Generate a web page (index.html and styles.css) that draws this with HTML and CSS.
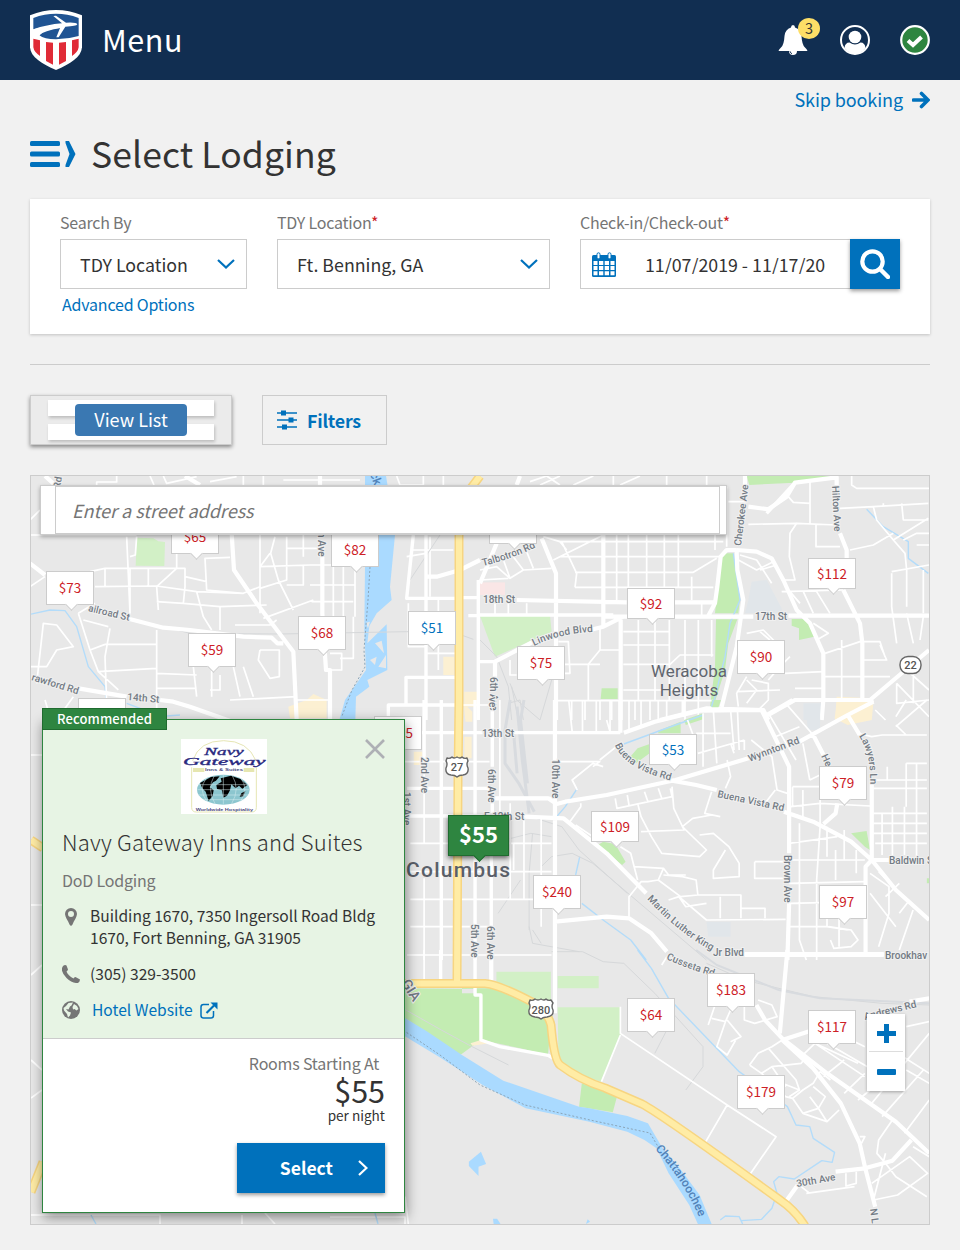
FILE: index.html
```html
<!DOCTYPE html>
<html lang="en">
<head>
  <meta charset="UTF-8" />
  <meta name="viewport" content="width=device-width, initial-scale=1.0"/>
  <title>Select Lodging</title>
  <link rel="stylesheet" href="styles.css">
</head>
<body>

  <header class="topbar">
    <svg class="logo" width="52" height="60" viewBox="0 0 156 180">
      <path d="M0 16Q78-16 156 16V112C154 142 120 162 78 180C36 162 2 142 0 112Z" fill="#fff"/>
      <path d="M10 24Q78-1 146 24V78Q112 88 78 88Q42 88 28 76Q42 62 90 54L80 46Q42 50 10 58Z" fill="#205493"/>
      <path d="M10 58Q50 44 96 40L70 18L78 17L108 38Q140 36 142 43Q140 49 106 50L86 82L79 82L90 54Q34 60 28 78L10 72Z" fill="#fff"/>
      <path d="M10 86L30 91V138Q12 126 10 112ZM48 96L69 98V164L48 153ZM87 98L108 96V153L87 164ZM126 91L146 86V112Q144 126 126 138Z" fill="#e02b37"/>
    </svg>
    <span class="menu">Menu</span>
    <div class="top-icons">
      <div class="bell">
        <svg width="30" height="30" viewBox="0 0 30 30">
          <path d="M15 0Q17 0 17 2.500Q23 4.500 23.500 11Q24 20 27 22.500Q29 24 29.500 26H.5Q1 24 3 22.500Q6 20 6.500 11Q7 4.500 13 2.500Q13 0 15 0Z" fill="#fff"/>
          <path d="M11 26a4 4 0 0 0 8 0Z" fill="#fff"/>
          <path d="M12 26.300a3 3 0 0 0 2 2.400" stroke="#112e51" fill="none"/>
        </svg>
        <span class="count">3</span>
      </div>
      <svg width="30" height="30" viewBox="0 0 30 30">
        <circle cx="15" cy="15" r="14" fill="#112e51" stroke="#fff" stroke-width="2"/>
        <circle cx="15" cy="12" r="6.300" fill="#fff"/>
        <path d="M4.500 23Q5 17.500 9.500 17.500Q15 21.500 20.500 17.500Q25 17.500 25.500 23Q21 29 15 29Q9 29 4.500 23Z" fill="#fff"/>
      </svg>
      <svg width="30" height="30" viewBox="0 0 30 30">
        <circle cx="15" cy="15" r="13.800" fill="#2e8540" stroke="#fff" stroke-width="2.200"/>
        <path d="M8 15.500L13 20L21.500 12" fill="none" stroke="#fff" stroke-width="4"/>
      </svg>
    </div>
  </header>

  <main>
    <a class="skip" href="#"><span>Skip booking</span>
      <svg width="18" height="18" viewBox="0 0 18 18"><path d="M1.500 9H15M9.500 2.500L16 9L9.500 15.500" fill="none" stroke="#0071bc" stroke-width="3.600" stroke-linecap="round"/></svg>
    </a>

    <div class="title">
      <svg width="46" height="28" viewBox="0 0 46 28">
        <g fill="#0071bc"><rect y="1" width="30" height="5" rx="1.500"/><rect y="11.500" width="30" height="5" rx="1.500"/><rect y="22" width="30" height="5" rx="1.500"/>
        <path d="M35.500 1H39L45.500 14L39 27H35.500V25L39.500 14L35.500 3Z"/></g>
      </svg>
      <h1>Select Lodging</h1>
    </div>

    <section class="search">
      <div class="field by">
        <label>Search By</label>
        <div class="box">TDY Location
          <svg width="18" height="10" viewBox="0 0 18 10"><path d="M1 1L9 8.500L17 1" fill="none" stroke="#0071bc" stroke-width="2.200"/></svg>
        </div>
        <a class="advanced" href="#">Advanced Options</a>
      </div>
      <div class="field loc">
        <label>TDY Location<b>*</b></label>
        <div class="box">Ft. Benning, GA
          <svg width="18" height="10" viewBox="0 0 18 10"><path d="M1 1L9 8.500L17 1" fill="none" stroke="#0071bc" stroke-width="2.200"/></svg>
        </div>
      </div>
      <div class="field dates">
        <label>Check-in/Check-out<b>*</b></label>
        <div class="date-row">
          <div class="box">
            <svg width="24" height="25" viewBox="0 0 24 25">
              <rect y="3" width="24" height="22" rx="1.500" fill="#0071bc"/>
              <path d="M1.500 9h4v4h-4zM7 9h4.300v4H7zM12.700 9H17v4h-4.300zM18.500 9h4v4h-4zM1.500 14h4v4h-4zM7 14h4.300v4H7zM12.700 14H17v4h-4.300zM18.500 14h4v4h-4zM1.500 19.200h4v4h-4zM7 19.200h4.300v4H7zM12.700 19.200H17v4h-4.300zM18.500 19.200h4v4h-4z" fill="#fff"/>
              <rect x="5" y=".8" width="3" height="6" rx="1.500" fill="#fff" stroke="#0071bc"/>
              <rect x="16" y=".8" width="3" height="6" rx="1.500" fill="#fff" stroke="#0071bc"/>
            </svg>
            <span class="range">11/07/2019 - 11/17/2019</span>
          </div>
          <button class="go" aria-label="Search">
            <svg width="30" height="30" viewBox="0 0 30 30"><circle cx="12.500" cy="12.500" r="10.200" fill="none" stroke="#fff" stroke-width="4.200"/><path d="M20 20L28 28" stroke="#fff" stroke-width="4.500" stroke-linecap="round"/></svg>
          </button>
        </div>
      </div>
    </section>

    <hr>

    <div class="actions">
      <button class="view-list"><i></i><i></i><span>View List</span></button>
      <button class="filters">
        <svg width="20" height="20" viewBox="0 0 20 20"><path d="M0 3H20M0 10H20M0 17H20" stroke="#0071bc" stroke-width="1.600"/><path d="M4 .5h5v5H4zM11.500 7.500h5v5h-5zM5 14.500h5v5H5z" fill="#0071bc"/></svg>
        Filters
      </button>
    </div>

    <section class="map" id="map">
      <svg class="streets" width="898" height="748" viewBox="31 476 898 748">
        <!-- north west -->
        <g transform="translate(30 470) scale(.33333)">
          <path class="water" d="M1005 18H1068L1075 60L1095 195L1080 350L1085 390L1040 430L1018 468L1012 520L1070 463L1072 600L1012 630L1018 650L978 680L976 750L955 805H920L928 750L945 690L1008 600L1003 480L1005 290Z"/>
          <path class="land" d="M1035 520L1055 512L1062 550ZM1020 570L1040 560L1035 585ZM1045 590L1068 555V595ZM1008 458L1020 455L1014 475Z"/>
          <path class="park light" d="M320 203L370 205L385 214L405 216L403 288L317 287Z"/>
          <path class="shop" d="M775 710L830 690L850 672L890 690V745H780ZM1240 560H1272V615H1240ZM1303 665H1345V710H1303Z"/>
          <path class="stream" d="M0 433L60 420L105 422L140 470L175 590L225 650L230 700M290 700L330 715L370 745L410 738L450 735"/>
          <path class="minor" d="M0 195H320M290 200L300 430L290 440M320 200L316 255L300 260M440 250V295L380 350L385 420M195 350L380 348L500 365L640 370L690 350M180 305L225 295H465V350L460 400M225 295V350M300 295V430M355 295V350M380 395L460 400L570 410L710 405M600 262L525 265L530 360L640 370M465 320L530 335M500 365L520 440L545 480M570 410V480M690 195V430M690 290L840 285H1005M735 200L722 250L745 330L790 420M720 250L690 290M770 200V330L690 355M770 235H870M820 195V260M820 285V345H770M840 345H975M845 395H970M910 290V440M940 290V440M975 290V440M700 445L850 390M615 465H720L740 450M380 480V750M240 475L225 560L230 700M380 523H225M380 610L500 615M380 655H500M205 605L380 595M490 590L500 680M545 590V680M570 615V660H540M610 590L630 680M640 590L670 680M600 690L800 680M800 690H900M690 540H748V620L720 625L685 570L690 540M900 550H935V600H890M930 565H970V440M20 640L40 460L80 465L130 530L80 540L50 590H0M145 430L180 540L205 605L265 660M195 400L145 430M0 350L45 320M160 450L235 470M180 540L225 523M0 150L30 120M200 45V36H260V18M360 18L372 45M500 20L410 40L400 18M540 35L620 20M760 30H990M640 18V45M700 18V45M1100 18L1110 45H1180V18M1240 18V45M1145 240H1270M1200 200V380M1130 260L1188 250M1225 385V600M1135 400V530H1188M1280 550H1190M130 680L80 750M45 690L60 740"/>
          <path class="rail" d="M400 470L480 490L750 492L1130 485L1280 490L1330 508M1230 195L1140 330"/>
          <path class="mid" d="M1188 195V750M1150 195L1130 385H1280M1275 622H1128V705M1275 705H1075V745M1345 330V750M1295 383H1350M1315 437H1350"/>
          <path class="main" d="M870 18V45M877 260V430L888 600H900V750M605 190L612 300L680 400L790 545L800 750M760 520H742L725 503L640 500L480 480L400 473L290 445M0 280L45 315M145 655L290 680M390 690L430 695L480 710L620 760M45 18L75 45M465 18L510 45M1190 320H1220L1290 300L1350 270"/>
        </g>
        <!-- north east -->
        <g transform="translate(480 470) scale(.33333)">
          <path class="park" d="M800 18H1070L1065 22L945 38L808 45ZM725 250H760L780 390L775 430H705L715 330ZM708 448H772L745 520L735 600L700 710H690L705 590ZM365 655H413V687H362ZM935 447H980L1003 500L957 510V475L935 467Z"/>
          <path class="park light" d="M0 438L210 437L215 485L45 560Z"/>
          <path class="block" d="M815 335L860 330L905 415V430H795L805 390ZM970 700H1025V750H970Z"/>
          <path class="pink" d="M0 337H75V375H0Z"/>
          <path class="shop" d="M1070 680L1180 685L1160 750H1065Z"/>
          <path class="stream" d="M760 250L780 390L750 460L735 560L715 640L700 700M1160 118L1210 170L1285 215V265L1345 310"/>
          <path class="rail" d="M0 510L50 560L85 650L95 750M90 640L110 690L180 750M215 630L180 750M85 700L120 690L130 750M95 650L115 750"/>
          <path class="minor" d="M240 215H730M240 260H720M285 307H640L710 265M285 352H700M410 195V390M445 195V390M500 195V390M553 195V350M595 195V350M635 320V390M245 215L290 310L285 352M190 200L240 215L260 240M220 270L370 195M0 300L50 290L90 325L130 300L215 295M85 325L0 330M65 255L90 325M100 260L130 300M140 245L160 295M45 400V435M85 400V435M140 400V435M665 400V435M705 120V240M740 50V230M680 18V45M150 35L200 18L240 45M180 45L240 18M280 45L340 18M420 45L480 18M400 18V45M560 18V45M745 95H800M805 163L950 160L930 190L928 260L945 330L905 330M950 160L1070 165M925 80L940 97L990 100M990 35V160M1008 165V230H1080M1115 18V45L1130 55H1347M1080 115L1180 110L1345 100M1180 110L1190 150L1240 210L1345 145M1240 210L1275 250L1280 300V410M1210 100V110M1265 100L1270 150H1345M1270 210L1310 190H1347M1310 225H1347M1110 240L1180 225L1240 190M775 270L830 300L880 275M780 255L830 270L875 340M840 300L890 285M905 365L1090 360M930 365L960 400M970 365L1000 430M1010 365L1050 430M1235 310V410L1250 520M1235 305L1347 285M1330 300V430M1280 430L1300 520M1330 440L1320 510M430 485H570M430 525H570M475 450V690M525 450V690M568 450V690M615 450V750M655 450V750M695 450V560M430 583H570L600 555H700M430 660H560L700 655M230 692H700M325 690V583L360 540V470M235 583H360M235 515H265L270 610H230M360 540H422M275 692V750M315 692V750M360 692V750M395 692V750M465 692V750M510 692V750M560 692V750M610 692V740M800 490L850 480L890 520M840 485L870 510M800 620L770 670L775 710M800 630L830 660L800 700M815 630L865 640V690L840 715M770 665L900 660M865 630L900 590L930 560M915 610L1030 605M945 655H1030M1035 550L1140 515H1200L1215 560M1000 460L1045 490L1010 510M1035 620H1145M1150 620H1230M1150 570H1220L1200 525M1085 510V690M1250 640V700L1347 690M1280 600L1347 660M1250 640L1347 740M1300 590V700M90 570V615H110"/>
          <path class="mid" d="M1080 750L1180 690M860 130L945 38M0 435H400M0 575H45"/>
          <path class="main" d="M795 18V45M770 240L740 240L722 260L712 350L705 400L685 437M770 240L830 245L875 265L910 330L950 420L990 460L1030 550V690L1025 750M770 245L772 300L790 390L770 530L725 710M805 110L865 118L920 80L945 38L1070 22V45M1080 190L1100 240V270M1090 360L1140 460L1147 520V690M370 440H820M925 437H1347M110 390L440 397M585 397H705M50 220L0 340M185 205L228 310V750M370 195V470M45 620V575L160 515M330 480L370 470L430 440M422 450V750M540 750L680 715L850 720L865 750M865 735L945 690L1170 690L1347 540M110 45L120 18"/>
        </g>
        <!-- downtown -->
        <g transform="translate(400 700) scale(.34435 .33333)">
          <path class="park" d="M750 92L815 65V100H750ZM690 145L725 132V160L685 190L665 175ZM825 60L880 40V58L830 75ZM905 0H932L925 22H905ZM575 435L590 425L625 432L655 485L645 495ZM1310 400L1355 393L1365 450L1350 440ZM1530 535H1537V550H1530Z"/>
          <path class="block" d="M1177 25H1220V90H1185ZM890 665H960V710H895Z"/>
          <path class="shop" d="M1270 10L1375 5L1370 60L1300 75L1262 55ZM185 10L210 35V65H190ZM187 110H208V175H187ZM40 155H65V195H40Z"/>
          <path class="stream" d="M905 20L910 0M880 45L760 90L650 132M515 265L480 320L455 350M522 470L510 525M528 610L590 660L670 720L715 780"/>
          <path class="railyard" d="M320 0L305 90V190L345 250L390 335M340 20L355 180L375 340M330 100L340 220M360 0L350 60L370 250"/>
          <path class="rail" d="M265 430L380 400L440 410M410 500L440 470L500 460L560 490L890 780M285 640L350 540M375 690V520L385 400M385 690L410 730M375 680L385 730L520 755M380 350L470 380L520 450L660 580"/>
          <path class="minor" d="M0 15H265M0 185H260M290 0V430M320 310V600M360 350V600M410 350V680M30 430H440M30 515H440M30 598H440M30 680H265M330 430V510M70 70V430M70 535V780M450 185H580L560 200M490 0L500 95M530 0V95M570 0V95M610 0V95M665 0V95M700 0V75M750 0V65M820 0V50M580 180L640 130M515 270L500 240L560 190L590 200M490 370L525 320V310M600 60L610 95M625 295L630 325L790 290L785 265M660 285L665 315M710 275L720 305M750 265L760 295M690 310L700 350L730 410L760 460L870 470L890 450L830 390L820 380L850 355L905 345M790 260L795 325L825 390L700 395M905 275L885 340L930 350M870 405L910 400L955 440L985 490V530L910 535V510L945 450M1030 485H1125M1030 485V535H1120M950 180L960 230L945 265M960 130L970 160M1000 120V150M1020 120L1080 170L1095 270L1125 280M1090 270L1060 310M880 40V200M910 30L920 190M960 30L970 150M980 30L985 150M835 60L860 130M860 100H960M865 160L1000 120M1140 260V320M1170 130L1190 240M1060 50L1090 110L1160 80M1070 40L1150 180M1120 10L1200 105M1200 105L1150 130M1190 240L1230 220M1140 260H1220M1135 320L1220 310L1365 318M1170 270V360M1220 300V380L1210 540V780M1240 380V470M1265 450V540M1290 390V480M1325 450V520M1160 370V720L1180 780M1130 430L1270 410M1130 480H1350M1130 550L1350 545M1130 610L1350 605M1130 680H1240L1300 690M1240 560V680M1275 650V740M1245 680L1310 690L1330 720L1310 740L1260 745L1250 720M1375 240H1530M1375 265H1530M1415 200V240M1470 190H1530M1470 190V320M1500 190V480M1375 340H1530M1375 370H1530M1375 400H1530M1400 340V465M1430 320V465M1465 320V465M1380 430H1530M1365 520L1420 560V640L1390 740M1390 515L1470 600M1410 590L1450 550M1450 640L1480 600M1490 630L1450 750M1365 580L1440 680M1330 100L1370 110L1400 105H1530M1440 80L1530 0M1440 75L1470 105M1380 30L1410 60M1470 0L1440 50M510 375L560 410M640 440L670 460L680 500L765 505L750 540L720 545L700 545L665 590V650M765 525L820 530L860 540L865 585L815 590L750 540M780 600L810 590L890 660L1120 658M865 585H990V655M930 590V655M990 625H1060V655M765 505L780 525L830 525M680 500L690 540M810 590L830 620L890 610"/>
          <path class="mid" d="M70 0V180M120 0V780M20 98H240M20 265H270M20 348H240M218 0V780M268 30V200M268 310V340M265 440V680M270 295H440M330 98H640"/>
          <path class="main" d="M450 0V180M450 290V780M640 0V98M650 98L740 65L870 32L1050 30L1130 200V460M1130 610L1125 780M455 312L480 305L600 285L800 240L1060 160M1160 125L1300 45L1375 5M790 242L860 255L920 270M1115 335L1200 365L1310 425L1370 480L1440 570L1537 660M1300 45L1335 105M1370 245V480L1352 500V760M1370 480H1420M270 295H430L455 312M360 350L475 355L600 460L715 580M450 665L600 650L665 655L730 700L775 755M1000 765H1405M1065 45L1140 0M1200 105L1230 165M1270 310L1265 340L1230 372"/>
        </g>
        <!-- riverside -->
        <g transform="translate(400 950) scale(.34435 .33333)">
          <path class="park" d="M15 115H215L235 265L370 300L430 315L420 285L450 220L440 190L370 160L290 115H215V130H180V115H15V205L175 315L235 270L430 312L440 205L370 160L290 118ZM528 400L630 440L618 487L520 470Z"/>
          <path class="park light" d="M280 65H438V160L370 150L280 105ZM458 78H577V115H458ZM458 172H640V255L585 395L530 380L460 330Z"/>
          <path class="shop" d="M205 280L235 270L260 280L210 287Z"/>
          <path class="water" d="M0 195L80 245L180 315L300 392L520 470L550 475L660 498L720 520L760 590L820 665L870 735L905 822H865L840 765L780 670L745 595L710 570L660 545L550 515L365 475L240 405L120 325L0 250ZM200 635L235 605L250 642L228 650V678L200 648ZM270 806H282L292 822H272ZM545 808L552 815L540 822Z"/>
          <path class="stream" d="M690 0L730 55L780 145L985 365L1060 420L1125 470L1150 525L1190 530L1200 565L1262 607L1255 637L1225 632L1145 687L1100 680L1085 695L1095 730L1080 775L1050 808L990 812M930 810L945 798L985 800L995 822"/>
          <path class="rail" d="M0 170L120 240L200 285L315 345M440 5H530L590 35L650 40L740 130L880 290V350L830 420M775 240L740 310M890 40L1000 90L1200 140L1400 160L1537 165"/>
          <path class="railyard thin" d="M860 0L920 45L1100 120L1220 145L1537 160"/>
          <path class="minor" d="M20 15H440M70 0V90M640 170V250L950 465L885 580M640 255L585 395M950 465L1092 560L1015 675M760 45L775 20M895 225L915 165L960 170M905 205L945 215M960 180L945 215L920 290L950 315L975 270M950 210L990 260L960 275M1000 160V210L1030 220L1095 200L1080 165L1040 150M1015 345L1040 310L1080 290L1110 270M1015 345L1050 370L1080 350L1165 340L1180 320M1070 295L1150 390L1160 420L1130 440M1050 370L1120 440L1140 445L1170 420L1200 400L1220 365M1140 445L1170 490L1215 475L1235 440L1200 410M1190 440L1215 475M1170 490L1240 515L1275 480M1215 475L1240 515M1080 350L1120 410M1110 400L1160 420M1165 320L1205 280L1330 340M1205 280L1350 380M1240 280L1440 400M1270 250L1350 290M1220 365L1250 390M1230 380L1290 330M1290 430L1350 370M1330 450L1460 340M1370 460L1537 250M1430 300L1537 370M1470 360L1537 400M1400 500L1520 360M1470 230L1537 215M1465 550L1537 450M1335 560H1350L1340 580M1430 510L1390 570L1385 610L1410 640L1440 680L1530 740M1410 610L1375 750L1445 735L1532 670L1480 620L1370 700M1490 590L1537 620M1180 730L1320 710M1165 710L1190 730M1295 670V708L1325 700V665M15 740L25 830"/>
          <path class="mid" d="M118 0V90M218 0V135H235V270L290 290L430 316L445 325"/>
          <path class="main" d="M450 0V190M265 0V90M1000 12H1405M1125 0L1103 250M1035 165L1060 210L1110 265L1240 370L1440 515L1537 610M1110 270L1200 355L1280 460L1335 580L1350 650L1380 770M1110 270L1200 240M1480 155L1537 145M1485 570L1430 632L1350 655L1265 665M1120 755L1155 705"/>
        </g>
        <!-- strips around the card -->
        <path class="minor" d="M31 755H42M31 905H42M31 975L42 965M31 1060L42 1070M31 1098L42 1090M31 1215H160V1224M242 1215V1224M265 1213L275 1224M330 1217H405V1224"/>
        <path class="stream" d="M91 1215L96 1224M375 1213L378 1224"/>
        <!-- highways -->
        <path class="hwy-edge" d="M31 840L43 848M31 1192L43 1162M471 488L480 476M459 533V700L458 780L457 983M405 983.500H485Q500 985 532 1002Q548 1012 551 1025Q554 1060 560 1065Q580 1080 605 1088L642 1104Q660 1113 780 1200Q795 1210 805 1226"/>
        <path class="hwy" d="M31 840L43 848M31 1192L43 1162M471 488L480 476M459 533V700L458 780L457 983M405 983.500H485Q500 985 532 1002Q548 1012 551 1025Q554 1060 560 1065Q580 1080 605 1088L642 1104Q660 1113 780 1200Q795 1210 805 1226"/>
        <path class="border" d="M370 567L368 600L364 650L365 667L352 690L342 716M400 1028L440 1055L480 1085L525 1105L590 1120L650 1133L660 1150"/>

        <path id="p-tal" d="M483 566Q515 558 538 546"/><path id="p-lin" d="M534 646Q560 633 595 632"/>
        <path id="p-wyn" d="M750 762Q775 752 806 741"/><path id="p-bv1" d="M615 745Q625 770 677 782"/>
        <path id="p-bv2" d="M717 797Q750 804 792 813"/><path id="p-mlk" d="M647 899Q685 940 725 957"/>
        <path id="p-cus" d="M666 959Q690 970 719 978"/><path id="p-law" d="M859 736Q872 755 870 790"/>
        <path id="p-chat" d="M655 1149Q690 1187 708 1240"/><path id="p-rail" d="M88 611Q108 616 134 622"/>
        <g class="road-label">
          <text textLength="56"><textPath href="#p-tal">Talbotron Rd</textPath></text>
          <text textLength="61"><textPath href="#p-lin">Linwood Blvd</textPath></text>
          <text><textPath href="#p-wyn">Wynnton Rd</textPath></text>
          <text><textPath href="#p-bv1">Buena Vista Rd</textPath></text>
          <text><textPath href="#p-bv2">Buena Vista Rd</textPath></text>
          <text><textPath href="#p-mlk">Martin Luther King</textPath></text>
          <text><textPath href="#p-cus">Cusseta Rd</textPath></text>
          <text><textPath href="#p-law">Lawyers Ln</textPath></text>
          <text><textPath href="#p-rail">ailroad St</textPath></text>
          <text x="483" y="603">18th St</text>
          <text x="755" y="620">17th St</text>
          <text x="482" y="737">13th St</text>
          <text x="484" y="820">E 12th St</text>
          <text x="889" y="864">Baldwin S</text>
          <text x="885" y="959">Brookhav</text>
          <text x="713" y="956">Jr Blvd</text>
          <text transform="translate(31 680) rotate(17)">rawford Rd</text>
          <text transform="translate(127 700) rotate(5)">14th St</text>
          <text transform="translate(741 546) rotate(-83)">Cherokee Ave</text>
          <text transform="translate(832 486) rotate(87)">Hilton Ave</text>
          <text transform="translate(318 532) rotate(90)">n Ave</text>
          <text transform="translate(490 677) rotate(90)">6th Ave</text>
          <text transform="translate(488 769) rotate(90)">6th Ave</text>
          <text transform="translate(421 757) rotate(90)">2nd Ave</text>
          <text transform="translate(403 792) rotate(90)">1st Ave</text>
          <text transform="translate(552 759) rotate(90)">10th Ave</text>
          <text transform="translate(471 924) rotate(90)">5th Ave</text>
          <text transform="translate(487 926) rotate(90)">6th Ave</text>
          <text transform="translate(489 697) rotate(90)">ve</text>
          <text transform="translate(784 855) rotate(90)">Brown Ave</text>
          <text transform="translate(821 756) rotate(65)">He</text>
          <text transform="translate(865 1020) rotate(-14)">Andrews Rd</text>
          <text transform="translate(797 1187) rotate(-10)">30th Ave</text>
          <text transform="translate(870 1209) rotate(82)">N L</text>
          <text transform="translate(60 489) rotate(-80)">Rd</text>
          <text class="state" transform="translate(401 983) rotate(58)">GIA</text>
        </g>
        <text class="river-label"><textPath href="#p-chat">Chattahoochee</textPath></text>
        <text class="river-label" transform="translate(370 474) rotate(70)">ck</text>
        <text class="place" x="689" y="677">Weracoba</text>
        <text class="place" x="689" y="696">Heights</text>
        <text class="city" x="406" y="877" textLength="104">Columbus</text>
        <g class="shield">
          <path d="M447 758q3 1 5-1q2 2 5 0q3 2 5 0q2 2 5 1l1 3q-2 3 0 7q1 6-5 7q-4 0-6 2q-2-2-6-2q-6-1-5-7q2-4 0-7z"/>
          <text x="457" y="771">27</text>
          <path d="M530 1000q3 1 5-1q3 2 6 0q3 2 5 0q2 2 5 1l2 3q-2 3 0 7q1 6-6 7q-4 0-6 2q-2-2-6-2q-7-1-6-7q2-4 0-7z"/>
          <text x="541" y="1014">280</text>
          <rect x="900" y="656.500" width="21" height="17" rx="8"/>
          <text x="910.500" y="669">22</text>
        </g>
      </svg>

      <div class="address"><div class="address-input">Enter a street address</div></div>

      <div class="zoom">
        <button aria-label="Zoom in"><svg width="19" height="19" viewBox="0 0 19 19"><path d="M9.500 2.500V16.500M2.500 9.500H16.500" stroke="#0071bc" stroke-width="5" stroke-linecap="square"/></svg></button>
        <button aria-label="Zoom out"><svg width="19" height="6" viewBox="0 0 19 6"><rect width="19" height="6" rx="1" fill="#0071bc"/></svg></button>
      </div>

      <article class="hotel">
        <span class="recommended">Recommended</span>
        <svg class="close" width="20" height="20" viewBox="0 0 20 20"><path d="M1 1L19 19M19 1L1 19" stroke="#aeb0b5" stroke-width="2.600"/></svg>
        <div class="about">
          <svg class="brand" width="86" height="75" viewBox="0 0 258 225">
            <rect width="258" height="225" fill="#fff"/>
            <path d="M35 65Q55 5 128 5Q200 5 225 65M32 85V205Q32 219 46 219H212Q226 219 226 205V85" fill="none" stroke="#e6e6b4" stroke-width="3"/>
            <rect x="36" y="87" width="184" height="12" fill="#e6e6b0"/>
            <rect x="70" y="84" width="118" height="16" fill="#fff"/>
            <ellipse cx="127" cy="152" rx="79" ry="45" fill="#8cc6cf"/>
            <path d="M57 132L90 114L116 112L105 125L96 130L86 145L98 153L95 170L83 186L74 158L64 148ZM119 118L150 110L178 120L199 138L184 149L174 140L164 148L151 136L147 154L138 170L127 176L123 154L108 150L106 138L122 128ZM181 163L193 156L187 172L176 173Z"/>
            <path d="M50 137H204M49 152H205M52 168H202M65 182H190M127 107V197M100 110Q76 150 102 194M154 110Q178 150 152 194M76 118Q50 150 78 188M180 118Q204 150 178 188" fill="none" stroke="#d9eef0" stroke-width="1.500"/>
            <g class="brand-name">
              <text x="70" y="49" font-size="31" textLength="118" lengthAdjust="spacingAndGlyphs">Navy</text>
              <text x="6" y="78" font-size="33" textLength="248" lengthAdjust="spacingAndGlyphs">Gateway</text>
            </g>
            <g class="brand-sub">
              <text x="72" y="97" textLength="114" lengthAdjust="spacingAndGlyphs">Inns &amp; Suites</text>
              <text x="44" y="215" textLength="172" lengthAdjust="spacingAndGlyphs">Worldwide Hospitality</text>
            </g>
          </svg>
          <h2>Navy Gateway Inns and Suites</h2>
          <p class="kind">DoD Lodging</p>
          <ul>
            <li class="addr"><svg width="18" height="18" viewBox="0 0 18 18"><path fill="#757575" fill-rule="evenodd" d="M9 0a6 6 0 0 1 6 6c0 3-3 6.500-4.500 10.500Q9 19 7.500 16.500C6 12.500 3 9 3 6a6 6 0 0 1 6-6ZM9 3a3 3 0 1 0 0 6a3 3 0 1 0 0-6Z"/></svg>
              <span>Building 1670, 7350 Ingersoll Road Bldg<br>1670, Fort Benning, GA 31905</span></li>
            <li><svg width="18" height="18" viewBox="0 0 18 18"><path fill="#757575" d="M1 1Q3-.5 4.500 .5L6 4.500Q5.500 6 4.500 6.500Q6 10.500 11.500 13.500Q12 12 13.500 12L18 14.500Q18 16.500 16 18Q10 18.500 4.500 13Q-1 7.500 0 3Z"/></svg>
              <span>(305) 329-3500</span></li>
            <li><svg width="18" height="18" viewBox="0 0 18 18"><circle cx="9" cy="9" r="9" fill="#757575"/><path fill="#e7f4e4" d="M6.500 2L11 1.500L9.500 4.500L8 5.500L6.500 8.500L4 8L6 10.500L9 11.500L8 14.500L6 16.500L5 13L2 9.500L1.500 7L4 5ZM12 3L15 5L16.500 8L14.500 9.500L12.500 8L11 8.500L10.500 6Z"/></svg>
              <a href="#">Hotel Website</a>
              <svg class="ext" width="18" height="17" viewBox="0 0 18 17"><path d="M9 2.500H3.500Q1 2.500 1 5V13.500Q1 16 3.500 16H11Q13.500 16 13.500 13.500V9" fill="none" stroke="#0071bc" stroke-width="1.500"/><path d="M6.500 11L14 3.500" stroke="#0071bc" stroke-width="2.200"/><path d="M10.500 .5H17.500V7.500Z" fill="#0071bc"/></svg></li>
          </ul>
        </div>
        <div class="price">
          <span class="from">Rooms Starting At</span>
          <strong>$55</strong>
          <span class="night">per night</span>
          <button class="select">Select
            <svg width="10" height="16" viewBox="0 0 10 16"><path d="M1 1L8.500 8L1 15" fill="none" stroke="#fff" stroke-width="2.200"/></svg>
          </button>
        </div>
      </article>
    </section>
  </main>

  <script>
    // x, y inside the map, price, extra class
    const pins = [
      [15, 95, '$73', ''], [140, 44, '$65', ''], [300, 57, '$82', ''],
      [157, 157, '$59', ''], [267, 140, '$68', ''], [377, 135, '$51', 'gov'],
      [47, 222, '', ''], [343, 240, '$115', ''], [458, 34, '', ''],
      [486, 170, '$75', ''], [596, 112, '$92', 'short'], [777, 82, '$112', 'short'],
      [706, 164, '$90', ''], [618, 258, '$53', 'gov short'], [788, 290, '$79', ''],
      [560, 335, '$109', 'short'], [502, 399, '$240', ''], [788, 409, '$97', ''],
      [596, 522, '$64', ''], [676, 497, '$183', ''], [777, 534, '$117', ''],
      [706, 599, '$179', ''], [417, 339, '$55', 'active']
    ];
    const map = document.getElementById('map');
    pins.forEach(([x, y, price, cls]) => {
      const pin = document.createElement('div');
      pin.className = 'pin ' + cls;
      pin.style.left = x + 'px';
      pin.style.top = y + 'px';
      pin.textContent = price;
      map.appendChild(pin);
    });
  </script>
</body>
</html>
```
FILE: styles.css
```css
* { box-sizing: border-box; }

body {
  margin: 0;
  background: #f1f1f1;
  color: #333;
  font-family: "Noto Sans CJK JP", "Noto Sans", sans-serif;
  font-size: 16px;
  line-height: 20px;
}

a { color: #0071bc; text-decoration: none; }
button { font: inherit; border: 0; padding: 0; cursor: pointer; }
svg { display: block; flex: none; }

.topbar {
  display: flex;
  align-items: center;
  height: 80px;
  padding: 0 30px;
  background: #112e51;
}
.menu {
  margin-left: 20px;
  padding-bottom: 2px;
  color: #fff;
  font-size: 30.5px;
  line-height: 40px;
  letter-spacing: .6px;
}
.top-icons { display: flex; gap: 30px; margin-left: auto; }
.bell { position: relative; margin-right: 2px; }
.count {
  position: absolute;
  left: 20px;
  top: -7px;
  width: 22px;
  height: 21px;
  border-radius: 50%;
  background: #fdde67;
  color: #333;
  font-size: 14.5px;
  line-height: 19px;
  text-align: center;
}

main { padding: 0 30px 25px; }

.skip {
  display: flex;
  justify-content: flex-end;
  align-items: center;
  gap: 9px;
  height: 40px;
  font-size: 18px;
  letter-spacing: -.1px;
}
.skip span { padding-bottom: 3px; }

.title { display: flex; align-items: center; gap: 15px; height: 68px; margin-bottom: 11px; }
.title h1 {
  margin: 0;
  padding-bottom: 2px;
  font-size: 35.5px;
  font-weight: 400;
  line-height: 50px;
  letter-spacing: .1px;
}

.search {
  display: flex;
  gap: 30px;
  height: 135px;
  padding: 13px 30px 0;
  background: #fff;
  box-shadow: 0 1px 3px rgba(0,0,0,.2);
}
.by { width: 187px; }
.loc { width: 273px; }
.dates { width: 320px; }
.field label {
  display: block;
  margin-bottom: 7px;
  color: #757575;
  letter-spacing: -.22px;
}
.field label b { color: #cd2026; font-weight: 400; }
.box {
  display: flex;
  align-items: center;
  justify-content: space-between;
  height: 50px;
  padding: 0 11px 0 19px;
  border: 1px solid #ccc;
  background: #fff;
  font-size: 17.8px;
}
.advanced { display: block; margin: 5px 0 0 2px; letter-spacing: -.2px; }
.date-row { display: flex; }
.dates .box { flex: 1; min-width: 0; justify-content: flex-start; padding: 0 24px 0 11px; border-right: 0; }
.range { flex: 1; min-width: 0; margin-left: 29px; overflow: hidden; white-space: nowrap; }
.go {
  display: flex;
  flex: none;
  align-items: center;
  justify-content: center;
  width: 50px;
  background: #0071bc;
  box-shadow: 0 2px 4px rgba(0,0,0,.4);
}

hr { margin: 30px 0; border: 0; border-top: 1px solid #ccc; }

.actions { display: flex; gap: 30px; margin-bottom: 30px; }
.view-list {
  position: relative;
  display: flex;
  flex-direction: column;
  justify-content: space-between;
  width: 202px;
  height: 50px;
  padding: 4px 17px;
  border: 1px solid #ccc;
  background: #ebebeb;
  box-shadow: 0 2px 4px rgba(0,0,0,.45);
}
.view-list i { height: 16px; background: #fff; box-shadow: 1px 2px 3px rgba(0,0,0,.2); }
.view-list span {
  position: absolute;
  left: 44px;
  top: 8px;
  width: 112px;
  height: 32px;
  border-radius: 4px;
  background: #3a78b2;
  color: #fff;
  font-size: 18px;
  line-height: 30px;
}
.filters {
  display: flex;
  align-items: center;
  gap: 10px;
  width: 125px;
  height: 50px;
  padding-left: 14px;
  border: 1px solid #ccc;
  background: #f1f1f1;
  color: #0071bc;
  font-size: 17.8px;
  font-weight: 700;
  letter-spacing: -.2px;
}

.map {
  position: relative;
  height: 750px;
  border: 1px solid #ccc;
  overflow: hidden;
  background: #e8e8e8;
}
.streets path { fill: none; vector-effect: non-scaling-stroke; stroke-linejoin: round; }
.streets .water { fill: #aadaff; }
.streets .land { fill: #e8e8e8; }
.streets .park { fill: #c3ecb2; }
.streets .park.light { fill: #d2f0c6; }
.streets .shop { fill: #fcf0d2; }
.streets .block { fill: #e1e6ea; }
.streets .pink { fill: #fae6e6; }
.streets .stream { stroke: #b3dcfa; stroke-width: 1.4; }
.streets .rail { stroke: #d6d8da; stroke-width: 1; }
.streets .railyard { stroke: #d8dbdf; stroke-width: 3; }
.streets .railyard.thin { stroke-width: 2; }
.streets .minor { stroke: #fff; stroke-width: 1.7; }
.streets .mid { stroke: #fff; stroke-width: 3.4; }
.streets .main { stroke: #fff; stroke-width: 4.2; }
.streets .hwy-edge { stroke: #f7d581; stroke-width: 9; }
.streets .hwy { stroke: #ffeca5; stroke-width: 6; }
.streets .border { stroke: #8ba5b8; stroke-dasharray: 2 2; }
.road-label, .river-label {
  font: 500 10px Roboto, sans-serif;
  fill: #737b84;
  stroke: #f0f0f0;
  stroke-width: 2px;
  paint-order: stroke;
}
.state { font-size: 14px; }
.river-label { font-size: 12px; fill: #5182b8; stroke: none; }
.place { font: 17px Roboto, sans-serif; fill: #60656e; text-anchor: middle; }
.city { font: 500 21px Roboto, sans-serif; fill: #5a5f69; }
.streets .shield path, .shield rect { fill: #fff; stroke: #666; stroke-width: 1.4; }
.shield text { font: 500 11px Roboto, sans-serif; fill: #555; text-anchor: middle; }

.pin {
  position: absolute;
  width: 48px;
  height: 34px;
  border: 1px solid #ccc;
  background: #fff;
  color: #cd2026;
  font-size: 13.5px;
  line-height: 30px;
  text-align: center;
}
.pin.short { height: 31px; line-height: 28px; }
.pin.gov { color: #0071bc; }
.pin::after {
  content: "";
  position: absolute;
  left: 20px;
  bottom: -5px;
  width: 8px;
  height: 8px;
  border: solid #ccc;
  border-width: 0 1px 1px 0;
  background: #fff;
  transform: rotate(45deg);
}
.pin.active {
  width: 61px;
  height: 41px;
  border-color: #1f6b2f;
  background: #2e8540;
  color: #fff;
  font-size: 22px;
  font-weight: 700;
  line-height: 34px;
  box-shadow: 0 2px 5px rgba(0,0,0,.6);
}
.pin.active::after { left: 26px; background: #2e8540; border-color: #1f6b2f; }

.address {
  position: absolute;
  left: 9px;
  top: 9px;
  z-index: 2;
  width: 687px;
  height: 50px;
  padding: 0 6px 0 14px;
  border: 1px solid #ccc;
  background: #fff;
  box-shadow: 0 2px 4px rgba(0,0,0,.3);
}
.address-input {
  height: 48px;
  padding-left: 16px;
  border: 1px solid #ccc;
  color: #757575;
  font-size: 18px;
  font-style: italic;
  line-height: 46px;
}

.zoom {
  position: absolute;
  left: 836px;
  top: 538px;
  z-index: 2;
  width: 38px;
  padding: 0 2px;
  background: #fff;
  box-shadow: 0 1px 3px rgba(0,0,0,.3);
}
.zoom button {
  display: flex;
  align-items: center;
  justify-content: center;
  width: 34px;
  height: 39px;
  background: #fff;
}
.zoom button:first-child { height: 38px; padding-top: 2px; border-bottom: 1px solid #ddd; }

.hotel {
  position: absolute;
  left: 11px;
  top: 243px;
  z-index: 3;
  width: 363px;
  height: 494px;
  border: 1px solid #2e8540;
  background: #fff;
  box-shadow: 1px 4px 12px rgba(0,0,0,.45);
}
.recommended {
  position: absolute;
  left: -1px;
  top: -12px;
  width: 125px;
  height: 22px;
  border: 1px solid #1f6b2f;
  background: #2e8540;
  color: #fff;
  font-size: 13px;
  font-weight: 500;
  line-height: 20px;
  letter-spacing: .1px;
  text-align: center;
}
.close { position: absolute; right: 19px; top: 19px; }
.about {
  height: 319px;
  padding: 19px 19px 0;
  border-bottom: 1px solid #ccc;
  background: #e7f4e4;
}
.brand { margin-left: 119px; }
.brand-name { font-family: "Liberation Serif", serif; font-style: italic; fill: #29297f; stroke: #29297f; }
.brand-sub { font: bold 13px "Liberation Sans", sans-serif; fill: #4a4a80; }
.about h2 {
  margin: 12px 0 0;
  font-size: 22px;
  font-weight: 300;
  line-height: 30px;
  letter-spacing: .2px;
  white-space: nowrap;
}
.kind { margin: 14px 0 0; color: #757575; letter-spacing: -.2px; }
.about ul { margin: 14px 0 0; padding: 0; list-style: none; }
.about li {
  display: flex;
  align-items: center;
  height: 22px;
  margin-bottom: 14px;
  font-size: 15.6px;
  line-height: 22px;
  white-space: nowrap;
}
.about li svg { margin: 2px 10px 0 0; }
.about li.addr { align-items: flex-start; height: 44px; }
.about .addr svg { margin-top: 4px; }
.about li .ext { margin: 2px 0 0 7px; }
.about li a { margin-left: 2px; }
.price {
  display: flex;
  flex-direction: column;
  align-items: flex-end;
  padding: 14px 19px 0;
}
.from { margin-right: 6px; color: #757575; letter-spacing: -.2px; }
.price strong { font-size: 30.5px; font-weight: 400; line-height: 35px; }
.night { font-size: 13.6px; line-height: 14px; }
.select {
  display: flex;
  align-items: center;
  justify-content: flex-end;
  gap: 25px;
  width: 148px;
  height: 50px;
  margin-top: 21px;
  padding-right: 17px;
  background: #0071bc;
  color: #fff;
  font-size: 17.5px;
  font-weight: 700;
  box-shadow: 0 2px 4px rgba(0,0,0,.4);
}
```
